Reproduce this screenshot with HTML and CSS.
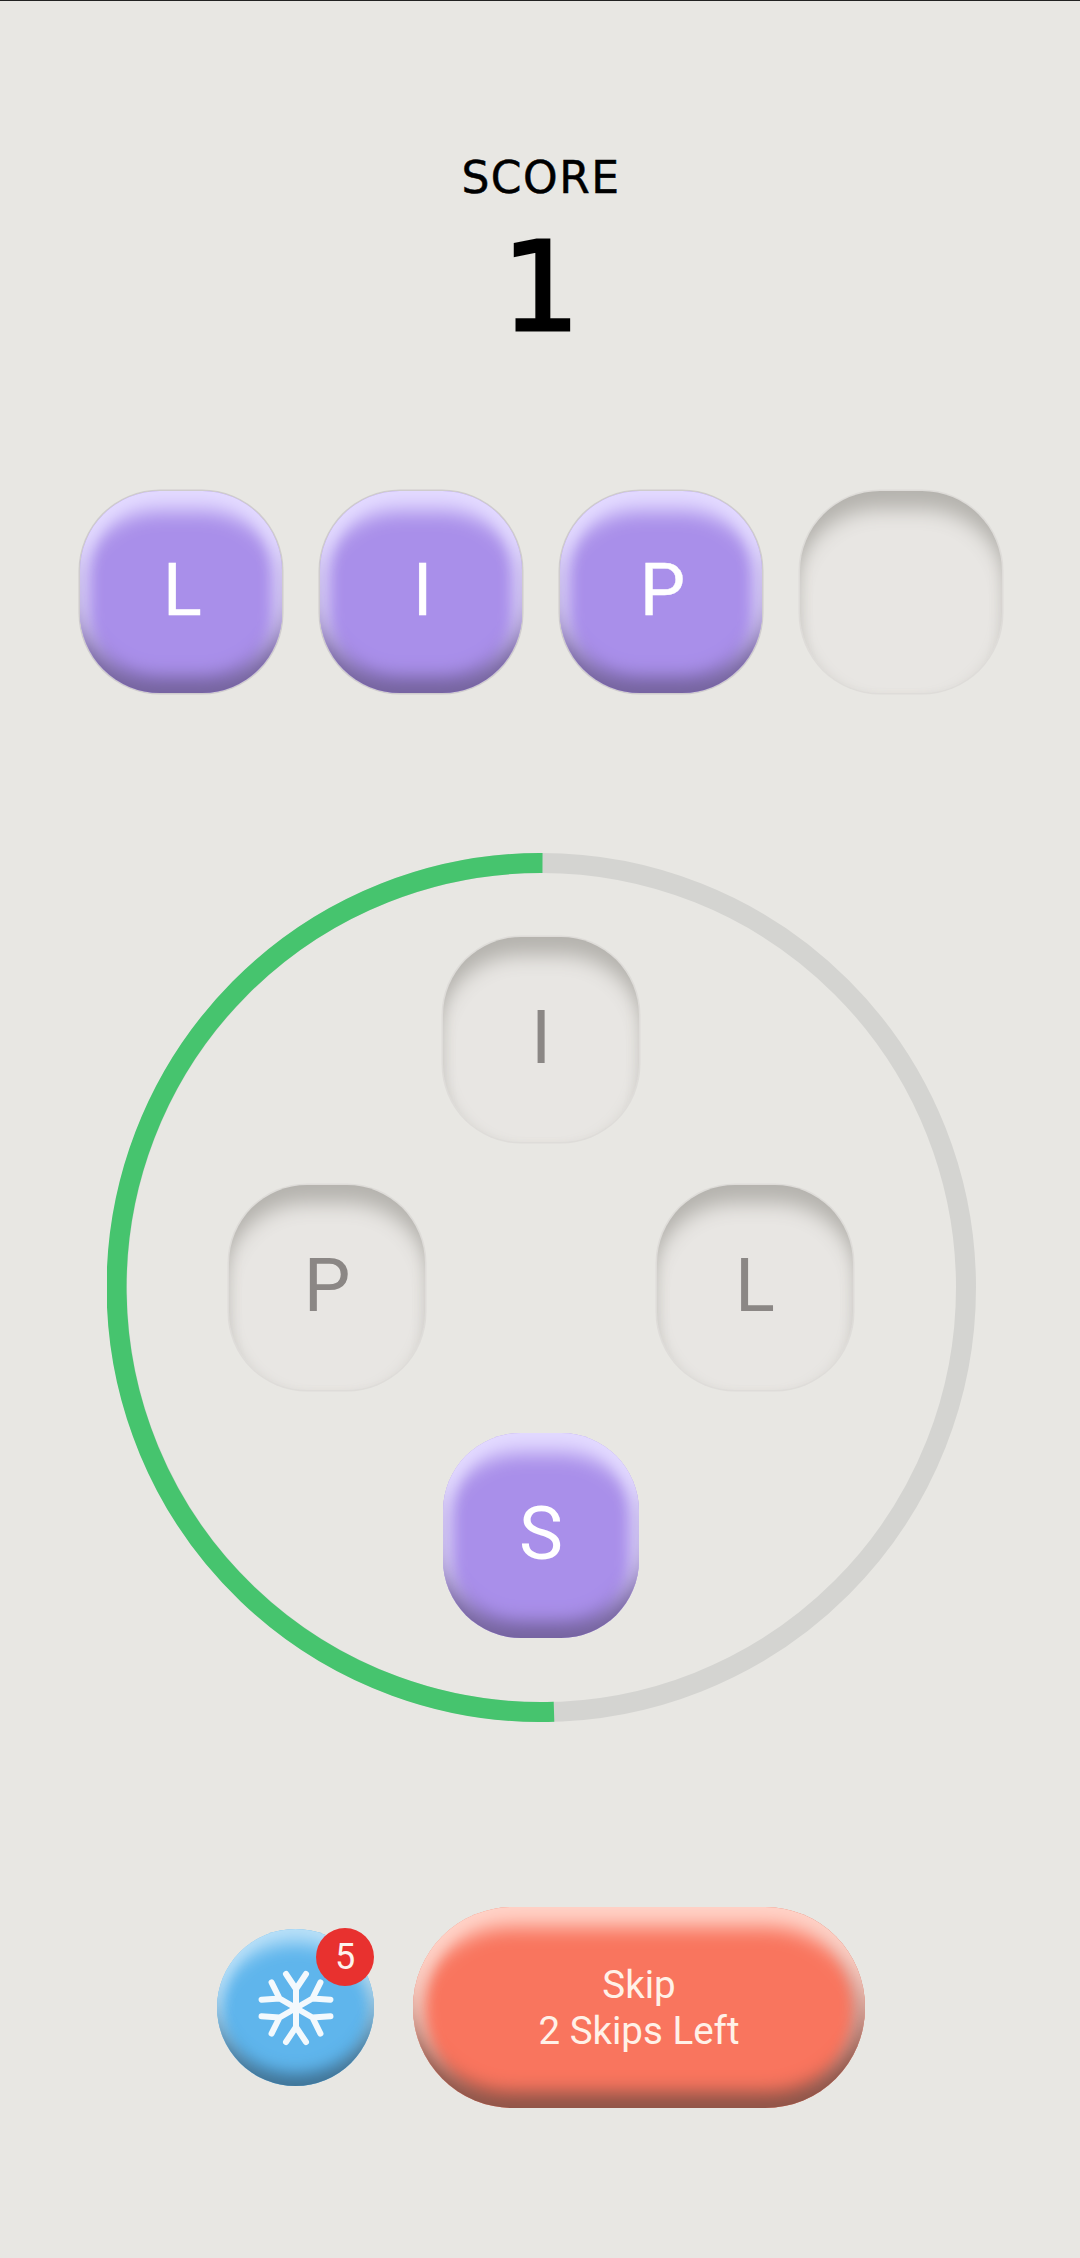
FILE: index.html
```html
<!DOCTYPE html>
<html lang="en">
  <head>
    <meta charset="UTF-8" />
    <title>Score</title>
    <link rel="stylesheet" href="styles.css">
  </head>
  <body>
    <div class="app">
      <div class="score">
        <div class="score-label">SCORE</div>
        <div class="score-num">1</div>
      </div>

      <div class="answer">
        <div class="tile on">L</div>
        <div class="tile on">I</div>
        <div class="tile on">P</div>
        <div class="tile empty"></div>
      </div>

      <div class="wheel">
        <svg class="ring" viewBox="0 0 869 869">
          <circle cx="434.5" cy="434.5" r="424.5" fill="none" stroke="#d4d4d1" stroke-width="20" />
          <path d="M435.5 10 A424.5 424.5 0 1 0 447 858.8" fill="none" stroke="#46c46e" stroke-width="20" />
        </svg>
        <div class="key empty pos-top">I</div>
        <div class="key empty pos-left">P</div>
        <div class="key empty pos-right">L</div>
        <div class="key on pos-bottom">S</div>
      </div>

      <div class="actions">
        <div class="freeze">
          <svg class="flake" viewBox="-40 -40 80 80">
            <defs>
              <path id="arm" d="M0 0V-19M-10 -34L0 -19L10 -34" />
            </defs>
            <g fill="none" stroke="#f3f9fd" stroke-width="6" stroke-linecap="round" stroke-linejoin="round">
              <use href="#arm" />
              <use href="#arm" transform="rotate(60)" />
              <use href="#arm" transform="rotate(120)" />
              <use href="#arm" transform="rotate(180)" />
              <use href="#arm" transform="rotate(240)" />
              <use href="#arm" transform="rotate(300)" />
            </g>
          </svg>
          <span class="badge">5</span>
        </div>
        <div class="skip">Skip<br />2 Skips Left</div>
      </div>
    </div>
  </body>
</html>
```

FILE: styles.css
```css
* {
  margin: 0;
  padding: 0;
  box-sizing: border-box;
}
body {
  background-color: #e8e7e3;
  font-family: Roboto, "Liberation Sans", sans-serif;
}
.app {
  width: 1080px;
  height: 2258px;
  padding-left: 2px;
  border-top: 1px solid #222;
  overflow: hidden;
}

/* score */
.score {
  padding-top: 145px;
  text-align: center;
  font-family: "DejaVu Sans", sans-serif;
  color: #000;
}
.score-label {
  font-size: 44px;
  line-height: 64px;
  letter-spacing: 1.5px;
  -webkit-text-stroke: 0.5px #000;
}
.score-num {
  font-size: 123px;
  line-height: 156px;
  -webkit-text-stroke: 3px #000;
}

/* tiles */
.answer {
  display: flex;
  justify-content: center;
  gap: 38px;
  margin-top: 125px;
}
.tile {
  width: 202px;
  height: 202px;
  border-radius: 80px;
  display: flex;
  align-items: center;
  justify-content: center;
  padding: 0 0 4px 3px;
  font-size: 72px;
  -webkit-text-stroke: 0.4px #fff;
}
.tile.on {
  color: #fff;
  background-color: #a98fea;
  box-shadow: 0 0 0 1.5px #cfcccd, inset 0 28px 20px -8px #e3daff, inset 0 -24px 18px -8px #75639f, inset 16px 0 14px -6px #d6cbf8, inset -16px 0 14px -6px #d6cbf8;
}
.tile.empty,
.key.empty {
  background-color: #e8e6e3;
  box-shadow: 0 0 0 1.5px #dedcd9, inset 0 26px 20px -8px #b5b3ae, inset 8px 0 12px -6px #d6d4d0, inset -8px 0 12px -6px #dad8d4;
}

/* wheel */
.wheel {
  position: relative;
  width: 869px;
  height: 869px;
  margin: 160px auto 0;
  padding: 84px 122.5px;
  display: grid;
  grid-template-columns: repeat(3, 196px);
  grid-template-rows: repeat(3, 205px);
  column-gap: 18px;
  row-gap: 43px;
}
.ring {
  position: absolute;
  top: 0;
  left: 0;
  width: 869px;
  height: 869px;
}
.key {
  position: relative;
  border-radius: 78px;
  display: flex;
  align-items: center;
  justify-content: center;
  padding-bottom: 4px;
  font-size: 74px;
}
.key.empty {
  color: #8b8785;
}
.key.on {
  color: #fff;
  background-color: #a98fea;
  box-shadow: inset 0 28px 20px -8px #e3daff, inset 0 -24px 18px -8px #75639f, inset 16px 0 14px -6px #d6cbf8, inset -16px 0 14px -6px #d6cbf8;
}
.pos-top {
  grid-area: 1 / 2;
}
.pos-left {
  grid-area: 2 / 1;
}
.pos-right {
  grid-area: 2 / 3;
}
.pos-bottom {
  grid-area: 3 / 2;
}

/* bottom buttons */
.actions {
  display: flex;
  justify-content: center;
  align-items: center;
  gap: 39px;
  margin-top: 185px;
}
.freeze {
  position: relative;
  width: 157px;
  height: 157px;
  border-radius: 50%;
  display: flex;
  align-items: center;
  justify-content: center;
  background-color: #5fb5ec;
  box-shadow: inset 0 22px 18px -8px #b9e0f8, inset 0 -20px 16px -8px #3f7396, inset 12px 0 12px -6px #a7d6f4, inset -12px 0 12px -6px #8fc0de;
}
.flake {
  width: 80px;
  height: 80px;
}
.badge {
  position: absolute;
  top: -1px;
  right: 0;
  width: 58px;
  height: 58px;
  border-radius: 50%;
  background-color: #e8312f;
  color: #fdf3ee;
  font-size: 36px;
  line-height: 58px;
  text-align: center;
}
.skip {
  width: 452px;
  height: 201px;
  border-radius: 100px;
  display: flex;
  align-items: center;
  justify-content: center;
  text-align: center;
  color: #fff1e8;
  font-size: 38.5px;
  line-height: 46px;
  background-color: #f9755e;
  box-shadow: inset 0 28px 20px -8px #ffd2c7, inset 0 -24px 18px -8px #8f5448, inset 18px 0 14px -6px #f3c3b8, inset -18px 0 14px -6px #d0a097;
}
```
